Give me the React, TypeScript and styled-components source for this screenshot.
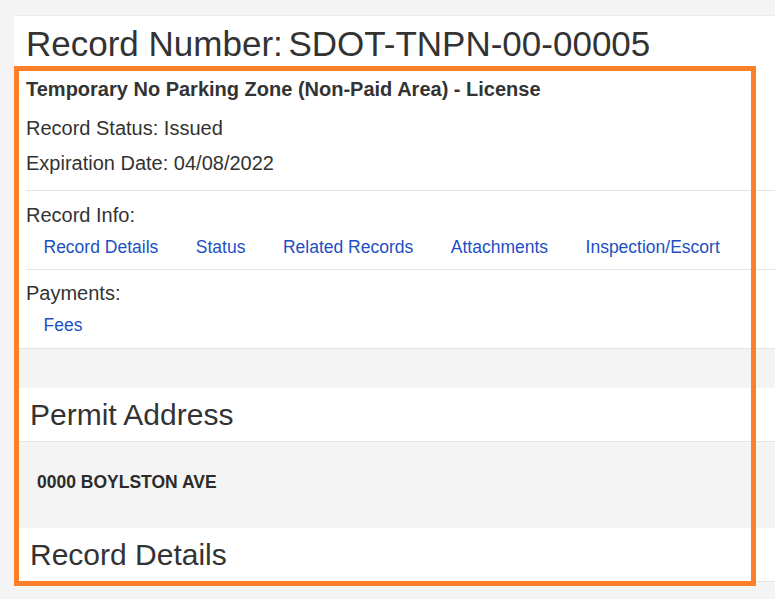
import React from "react";
import styled, { createGlobalStyle } from "styled-components";

const GlobalStyle = createGlobalStyle`
  html, body {
    margin: 0;
    padding: 0;
    background: #f4f4f4;
  }
  body {
    font-family: "Liberation Sans", Arial, sans-serif;
    color: #333333;
  }
`;

const Page = styled.div`
  width: 775px;
  height: 599px;
  overflow: hidden;
  padding-top: 15px;
  box-sizing: border-box;
`;

const Card = styled.div`
  position: relative;
  margin-left: 14px;
  background: #ffffff;
  border-top: 1px solid #ececec;
`;

const TitleBar = styled.div`
  padding: 8px 0 3px 12px;
`;

const Title = styled.h1`
  margin: 0;
  font-size: 35px;
  line-height: 40px;
  font-weight: normal;
  color: #333333;
  white-space: nowrap;
`;

const TitleValue = styled.span`
  margin-left: -4px;
`;

const Summary = styled.div`
  padding-top: 5px;
  border-bottom: 1px solid #e4e4e4;
`;

const Group = styled.div<{ $divided?: boolean; $top: number; $bottom: number }>`
  margin-left: 12px;
  padding-top: ${(p) => p.$top}px;
  padding-bottom: ${(p) => p.$bottom}px;
  border-bottom: ${(p) => (p.$divided ? "1px solid #e4e4e4" : "none")};
`;

const RecordType = styled.div`
  font-size: 20px;
  font-weight: bold;
  line-height: 35px;
  margin-bottom: 4px;
`;

const InfoLine = styled.div`
  font-size: 20px;
  line-height: 35px;
`;

const LinkRow = styled.div`
  display: flex;
  gap: 37.5px;
  padding-left: 17.5px;
  height: 28px;
  align-items: center;
`;

const NavLink = styled.a`
  font-size: 17.5px;
  line-height: 28px;
  color: #1d4fc3;
  text-decoration: none;
  white-space: nowrap;
  cursor: pointer;
`;

const Spacer = styled.div`
  height: 39px;
  background: #f4f4f4;
`;

const SectionHeader = styled.div`
  height: 53px;
  padding-left: 16px;
  font-size: 30px;
  line-height: 53px;
  color: #333333;
  background: #ffffff;
  border-bottom: 1px solid #e4e4e4;
`;

const AddressBlock = styled.div`
  background: #f4f4f4;
  padding: 29px 0 35px 23px;
`;

const AddressText = styled.div`
  font-size: 17.5px;
  font-weight: bold;
  line-height: 22px;
  color: #2b2b2b;
`;

const Highlight = styled.div`
  position: absolute;
  left: 0;
  top: 50px;
  width: 742px;
  height: 520px;
  box-sizing: border-box;
  border: 5px solid #fd7f28;
  pointer-events: none;
`;

const recordInfoLinks = [
  "Record Details",
  "Status",
  "Related Records",
  "Attachments",
  "Inspection/Escort",
];

export default function App() {
  return (
    <>
      <GlobalStyle />
      <Page>
        <Card>
          <TitleBar>
            <Title>
              Record Number: <TitleValue>SDOT-TNPN-00-00005</TitleValue>
            </Title>
          </TitleBar>
          <Summary>
            <Group $divided $top={0} $bottom={9}>
              <RecordType>
                Temporary No Parking Zone (Non-Paid Area) - License
              </RecordType>
              <InfoLine>Record Status: Issued</InfoLine>
              <InfoLine>Expiration Date: 04/08/2022</InfoLine>
            </Group>
            <Group $divided $top={7} $bottom={8}>
              <InfoLine>Record Info:</InfoLine>
              <LinkRow>
                {recordInfoLinks.map((l) => (
                  <NavLink key={l}>{l}</NavLink>
                ))}
              </LinkRow>
            </Group>
            <Group $top={6} $bottom={9}>
              <InfoLine>Payments:</InfoLine>
              <LinkRow>
                <NavLink>Fees</NavLink>
              </LinkRow>
            </Group>
          </Summary>
          <Spacer />
          <SectionHeader>Permit Address</SectionHeader>
          <AddressBlock>
            <AddressText>0000 BOYLSTON AVE</AddressText>
          </AddressBlock>
          <SectionHeader>Record Details</SectionHeader>
          <Highlight />
        </Card>
      </Page>
    </>
  );
}
